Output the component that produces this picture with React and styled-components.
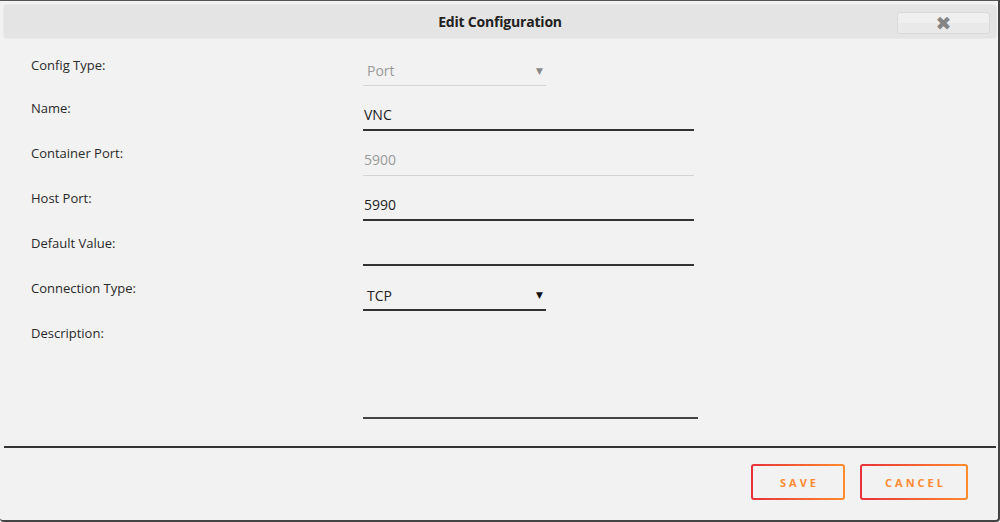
import React from "react";
import styled, { createGlobalStyle } from "styled-components";

const GlobalStyle = createGlobalStyle`
  html, body {
    margin: 0;
    padding: 0;
    background: #f2f2f2;
    font-family: "Open Sans", "Noto Sans", sans-serif;
  }
  * {
    box-sizing: border-box;
  }
`;

const fields = [
  { label: "Config Type:", kind: "select", value: "Port", disabled: true },
  { label: "Name:", kind: "input", value: "VNC" },
  { label: "Container Port:", kind: "input", value: "5900", disabled: true },
  { label: "Host Port:", kind: "input", value: "5990" },
  { label: "Default Value:", kind: "input", value: "" },
  { label: "Connection Type:", kind: "select", value: "TCP" },
  { label: "Description:", kind: "textarea", value: "" },
];

const App = () => {
  return (
    <>
      <GlobalStyle />
      <Dialog>
        <Header>
          <Title>Edit Configuration</Title>
          <CloseButton>✖</CloseButton>
        </Header>
        <FormBody>
          {fields.map((f, i) => (
            <Row key={f.label}>
              <Label $first={i === 0}>{f.label}</Label>
              {f.kind === "select" && (
                <SelectBox $disabled={f.disabled}>
                  <span>{f.value}</span>
                  <Arrow $disabled={f.disabled}>▼</Arrow>
                </SelectBox>
              )}
              {f.kind === "input" && (
                <TextInput $disabled={f.disabled}>{f.value}</TextInput>
              )}
              {f.kind === "textarea" && <TextArea />}
            </Row>
          ))}
        </FormBody>
        <Divider />
        <Footer>
          <ActionButton>SAVE</ActionButton>
          <ActionButton $wide>CANCEL</ActionButton>
        </Footer>
      </Dialog>
    </>
  );
};

export default App;

const Dialog = styled.div`
  width: 1000px;
  height: 522px;
  display: flex;
  flex-direction: column;
  background: #f2f2f2;
  border-top: 1px solid #555;
  border-right: 2px solid #444;
  border-bottom: 2px solid #444;
  border-radius: 0 0 4px 4px;
  padding: 3px 1px 0 3px;
`;

const Header = styled.div`
  height: 35px;
  display: flex;
  align-items: center;
  justify-content: center;
  position: relative;
  background: #e4e4e4;
  border: 1px solid #e9e9e9;
  border-radius: 4px;
`;

const Title = styled.h1`
  margin: 0;
  font-size: 14px;
  font-weight: 700;
  color: #222;
  letter-spacing: -0.2px;
`;

const CloseButton = styled.button`
  position: absolute;
  right: 6px;
  top: 7px;
  width: 93px;
  height: 22px;
  border: 1px solid #d9d9d9;
  border-radius: 3px;
  background: linear-gradient(#efefef 50%, #e9e9e9 50%);
  color: #858585;
  font-size: 19px;
  line-height: 1;
  padding: 0;
  font-family: "DejaVu Sans", sans-serif;
`;

const FormBody = styled.div`
  display: flex;
  flex-direction: column;
  padding: 17px 0 0 28px;
`;

const Row = styled.div`
  display: grid;
  grid-template-columns: 332px 1fr;
  align-items: start;
  min-height: 45px;
`;

const Label = styled.label`
  font-size: 13px;
  line-height: 18px;
  margin-top: ${(p) => (p.$first ? "0" : "-2px")};
  color: #2a2a2a;
`;

const SelectBox = styled.div`
  width: 183px;
  height: 30px;
  display: flex;
  align-items: center;
  justify-content: space-between;
  padding: 0 1px 0 4px;
  font-size: 14px;
  color: ${(p) => (p.$disabled ? "#9a9a9a" : "#222")};
  border-bottom: ${(p) => (p.$disabled ? "1px solid #d4d4d4" : "2px solid #333")};
`;

const Arrow = styled.span`
  font-size: 9px;
  font-family: "DejaVu Sans", sans-serif;
  color: ${(p) => (p.$disabled ? "#888" : "#111")};
  padding-right: 2px;
`;

const TextInput = styled.div`
  width: 331px;
  height: 30px;
  padding: 5px 0 0 1px;
  font-size: 14px;
  line-height: 18px;
  color: ${(p) => (p.$disabled ? "#9a9a9a" : "#222")};
  border-bottom: ${(p) => (p.$disabled ? "1px solid #d4d4d4" : "2px solid #333")};
`;

const TextArea = styled.div`
  width: 335px;
  height: 93px;
  border-bottom: 2px solid #444;
`;

const Divider = styled.hr`
  margin: 27px 1px 0 1px;
  border: none;
  border-top: 2px solid #333;
`;

const Footer = styled.div`
  display: flex;
  justify-content: flex-end;
  gap: 15px;
  padding: 16px 29px 0 0;
`;

const ActionButton = styled.button`
  width: ${(p) => (p.$wide ? "108px" : "94px")};
  height: 36px;
  border: 2px solid transparent;
  border-radius: 3px;
  background: linear-gradient(#f2f2f2, #f2f2f2) padding-box,
    linear-gradient(90deg, #e8303a, #ff8c2e) border-box;
  color: #ff8a33;
  font-family: "Open Sans", sans-serif;
  font-size: 11px;
  font-weight: 700;
  letter-spacing: 3px;
  padding: 0 0 0 3px;
`;
